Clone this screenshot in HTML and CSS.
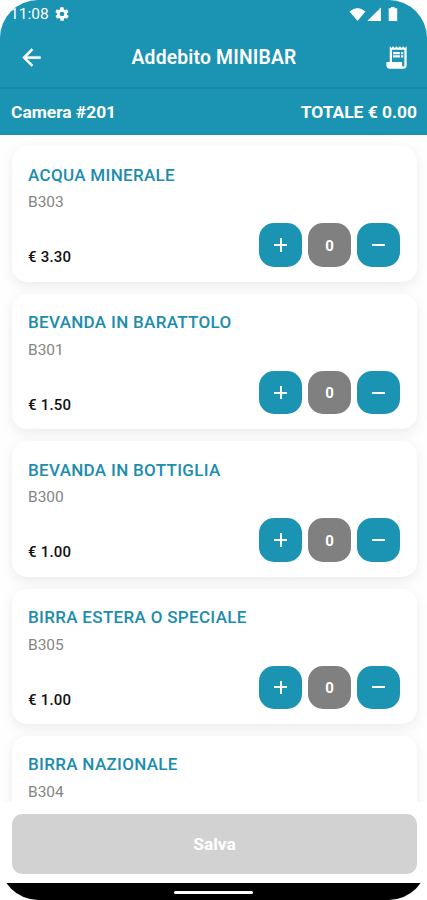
FILE: index.html
```html
<!DOCTYPE html>
<html lang="it">
<head>
<meta charset="utf-8">
<title>Addebito MINIBAR</title>
<link rel="stylesheet" href="styles.css">
</head>
<body>
<div class="screen">
  <div class="status">
    <span class="clock">11:08</span>
    <svg class="gear" viewBox="0 0 24 24"><path fill="#fff" fill-rule="evenodd" d="M19.4 13a7.500 7.500 0 0 0 0-2l2.100-1.600c.2-.2.300-.4.100-.6l-2-3.500c-.1-.2-.4-.3-.6-.2l-2.500 1a7.300 7.300 0 0 0-1.700-1l-.4-2.600c0-.3-.2-.5-.5-.5h-4c-.2 0-.4.200-.5.400l-.4 2.700a7.700 7.700 0 0 0-1.700 1l-2.500-1c-.2-.1-.5 0-.6.200l-2 3.500c-.1.200-.1.500.1.600L4.600 11a8 8 0 0 0 0 2l-2.100 1.600c-.2.200-.2.400-.1.600l2 3.500c.1.200.4.300.6.200l2.500-1c.5.400 1.100.7 1.700 1l.4 2.700c0 .2.200.4.500.4h4c.2 0 .4-.2.500-.4l.4-2.700a7 7 0 0 0 1.700-1l2.500 1c.2.100.5 0 .6-.2l2-3.500c.1-.2.100-.5-.1-.6zM12 15.500a3.500 3.500 0 1 1 0-7 3.500 3.500 0 0 1 0 7z"/></svg>
    <svg class="signals" viewBox="0 0 50 16"><g fill="#fff"><path d="M.5 4.500Q8.500-2.500 16.500 4.500L8.500 14z"/><path d="M18.700 14V13.500L32 .5V14z"/><path d="M41.900 0h3.600v1.300h2.700V14h-8.500V1.300h2.200z"/></g></svg>
  </div>
  <header class="appbar">
    <svg class="back" viewBox="0 0 24 24"><path fill="#fff" stroke="#fff" stroke-width=".4" d="M20 11H7.830l5.590-5.590L12 4l-8 8 8 8 1.410-1.410L7.830 13H20z"/></svg>
    <h1>Addebito MINIBAR</h1>
    <svg class="receipt" viewBox="0 0 24 24"><path fill="#fff" d="M19.500 3.500L18 2l-1.500 1.500L15 2l-1.500 1.500L12 2l-1.500 1.500L9 2 7.500 3.500 6 2v14H3v3c0 1.660 1.340 3 3 3h12c1.660 0 3-1.340 3-3V2zM19 19c0 .55-.45 1-1 1s-1-.45-1-1v-3H8V5h11z"/><path fill="#fff" d="M9 7h6v2H9zM16 7h2v2h-2zM9 10h6v2H9zM16 10h2v2h-2z"/></svg>
  </header>
  <div class="summary"><span>Camera #201</span><span class="total">TOTALE € 0.00</span></div>
  <main class="list">
    <article class="card">
      <h2>ACQUA MINERALE</h2><p class="code">B303</p>
      <div class="row"><span class="price">€ 3.30</span><div class="stepper"><button class="plus"></button><output>0</output><button class="minus"></button></div></div>
    </article>
    <article class="card">
      <h2>BEVANDA IN BARATTOLO</h2><p class="code">B301</p>
      <div class="row"><span class="price">€ 1.50</span><div class="stepper"><button class="plus"></button><output>0</output><button class="minus"></button></div></div>
    </article>
    <article class="card">
      <h2>BEVANDA IN BOTTIGLIA</h2><p class="code">B300</p>
      <div class="row"><span class="price">€ 1.00</span><div class="stepper"><button class="plus"></button><output>0</output><button class="minus"></button></div></div>
    </article>
    <article class="card">
      <h2>BIRRA ESTERA O SPECIALE</h2><p class="code">B305</p>
      <div class="row"><span class="price">€ 1.00</span><div class="stepper"><button class="plus"></button><output>0</output><button class="minus"></button></div></div>
    </article>
    <article class="card">
      <h2>BIRRA NAZIONALE</h2><p class="code">B304</p>
    </article>
  </main>
  <footer class="actions"><button class="save">Salva</button></footer>
  <div class="navbar"><span class="handle"></span></div>
</div>
</body>
</html>
```
FILE: styles.css
```css
* { box-sizing: border-box; margin: 0; padding: 0; }
body { background: #fff; font-family: Roboto, sans-serif; }
button { border: 0; font: inherit; }
svg { display: block; flex: none; }
.screen {
  width: 427px; height: 900px; overflow: hidden;
  border-radius: 38px; background: #fefefe;
  display: flex; flex-direction: column;
}
.status {
  height: 28px; flex: none; background: #1b93b3; color: #fff;
  display: flex; align-items: center; padding: 0 28px 0 10px;
}
.clock { width: 38px; font-size: 15.500px; line-height: 28px; white-space: nowrap; }
.gear { width: 16px; height: 16px; margin-left: 6px; }
.signals { width: 50px; height: 16px; margin-left: auto; margin-top: 1px; }
.appbar {
  height: 61px; flex: none; background: #1b93b3; color: #fff;
  display: flex; align-items: center; padding: 0 17px 2px 18px;
  border-bottom: 2px solid #198aa9;
}
.back { width: 27px; height: 27px; margin-top: 1px; }
.appbar h1 {
  flex: 1; text-align: center; font-size: 19.300px; line-height: 24px; font-weight: 600;
  letter-spacing: .2px; padding-top: 2px;
}
.receipt { width: 27px; height: 27px; margin-top: 2px; }
.summary {
  height: 46px; flex: none; background: #1b93b3; color: #fff;
  display: flex; justify-content: space-between; align-items: center;
  padding: 0 10px 0 11px; font-size: 17.400px; font-weight: 700;
  border-bottom: 1px solid #1789a9;
}
.list {
  height: 666.500px; flex: none; overflow: hidden; padding: 11.400px 10px 0 12px;
  display: flex; flex-direction: column; gap: 11.800px;
}
.card {
  height: 135.600px; flex: none; background: #fff; border-radius: 15px;
  padding: 17.500px 16.700px 15px 16px; display: flex; flex-direction: column;
  box-shadow: 0 4px 13px rgba(0,0,0,.08);
}
.card h2 {
  font-size: 17px; line-height: 22px; font-weight: 500; letter-spacing: .32px;
  color: #1b8dae; white-space: nowrap;
}
.code { font-size: 15.500px; line-height: 20px; margin-top: 6.500px; color: #858585; }
.row { margin-top: auto; display: flex; justify-content: space-between; align-items: flex-end; }
.price { font-size: 15px; line-height: 18.500px; font-weight: 500; letter-spacing: .2px; color: #111; }
.stepper { display: flex; gap: 5.500px; }
.stepper button, .stepper output {
  width: 43.500px; height: 43.500px; border-radius: 15px;
  display: flex; align-items: center; justify-content: center;
  color: #fff; background: #1b93b3; font-size: 15px; font-weight: 700;
}
.stepper output { background: #808080; padding-top: 1px; }
.plus, .minus { position: relative; }
.plus::before, .minus::before { content: ""; width: 13.500px; height: 2px; background: #fff; }
.plus::after { content: ""; position: absolute; width: 2px; height: 13.500px; background: #fff; }
.actions { flex: 1; padding: 12px 10px 9px 12px; background: #fff; display: flex; }
.save { flex: 1; border-radius: 10px; background: #d2d2d2; color: #fff; font-size: 17.300px; font-weight: 700; }
.navbar { height: 17px; flex: none; background: #000; display: flex; justify-content: center; align-items: center; }
.handle { width: 79px; height: 3px; border-radius: 2px; background: #fff; margin-top: 2px; }
```
